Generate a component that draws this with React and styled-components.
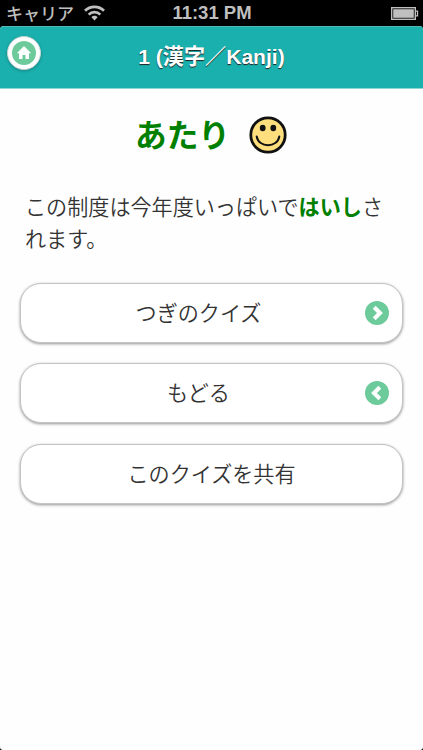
import React from "react";
import styled, { createGlobalStyle } from "styled-components";

const GlobalStyle = createGlobalStyle`
  * { box-sizing: border-box; }
  body {
    margin: 0;
    background: #000;
    font-family: "Liberation Sans", "Noto Sans CJK JP", sans-serif;
  }
`;

const Screen = styled.div`
  width: 423px;
  height: 750px;
  overflow: hidden;
  display: flex;
  flex-direction: column;
  background: #000;
`;

const StatusBar = styled.div`
  flex: none;
  height: 26px;
  display: grid;
  grid-template-columns: 1fr auto 1fr;
  align-items: center;
  padding: 0 4px 0 5px;
  color: #bfbfbf;
`;

const Carrier = styled.div`
  display: flex;
  align-items: center;
  gap: 10px;
  padding-left: 1px;
  font: 500 17px/26px "Noto Sans CJK JP", sans-serif;
`;

const Clock = styled.div`
  font-size: 18.5px;
  font-weight: 700;
  line-height: 26px;
`;

const Battery = styled.svg`
  justify-self: end;
  display: block;
`;

const AppWindow = styled.div`
  flex: 1;
  display: flex;
  flex-direction: column;
  background: #fefefe;
  border-radius: 4px 4px 3px 3px;
  overflow: hidden;
`;

const Header = styled.header`
  flex: none;
  height: 63px;
  display: grid;
  grid-template-columns: 47px 1fr 47px;
  background: #1ab0ae;
  border-top: 1px solid #57b9b7;
  border-bottom: 1px solid #8fd5d3;
`;

const HomeButton = styled.button`
  width: 34px;
  height: 34px;
  margin: 9px 0 0 7px;
  padding: 0;
  border: 1px solid #c5d5d3;
  border-radius: 50%;
  background: #fff;
  display: flex;
  align-items: center;
  justify-content: center;
  box-shadow: 0 1px 3px rgba(0, 0, 0, 0.25);
`;

const Title = styled.h1`
  margin: 0;
  text-align: center;
  color: #fff;
  font-size: 21.1px;
  font-weight: 700;
  line-height: 60px;
  white-space: nowrap;
  text-shadow: 0 1px 1px #222;
`;

const Content = styled.main`
  padding: 22px 20px 0;
`;

const Result = styled.div`
  display: flex;
  align-items: center;
  justify-content: center;
  gap: 18px;
  height: 48px;
`;

const ResultText = styled.h2`
  margin: 0 0 5px;
  color: #008000;
  font: 700 31.7px/48px "Noto Sans CJK JP", sans-serif;
`;

const Sentence = styled.p`
  margin: 31px 0 29px;
  padding: 0 0 0 5px;
  color: #333;
  font: 350 21.1px/32px "Noto Sans CJK JP", sans-serif;
`;

const Answer = styled.b`
  color: #008000;
  font-weight: 700;
`;

const Actions = styled.div`
  display: flex;
  flex-direction: column;
  gap: 20.4px;
`;

const ActionButton = styled.button`
  width: 383px;
  height: 60px;
  padding: 0 ${(p) => (p.$icon ? "13px" : "0")} 0 0;
  display: grid;
  grid-template-columns: ${(p) => (p.$icon ? "13px 1fr 24px" : "1fr")};
  align-items: center;
  border: 1px solid #c4c4c4;
  border-radius: 21px;
  background: #fff;
  box-shadow: 0 1px 3px rgba(0, 0, 0, 0.42);
  color: #333;
  font: 350 21.1px/32px "Noto Sans CJK JP", sans-serif;
`;

const Label = styled.span`
  text-align: center;
  padding: 0 ${(p) => p.$inset || 0}px 2px 0;
`;

function WifiIcon() {
  return (
    <svg width="21" height="16" viewBox="0 0 21 16" fill="none" stroke="#bfbfbf" strokeWidth="2.7">
      <path d="M1 5.8C6.1.5 14.9.5 20 5.8" />
      <path d="M4.7 9.6c3.1-3.3 8.5-3.3 11.6 0" />
      <path d="M7.4 12.2c1.7-1.8 4.5-1.8 6.2 0l-3.1 3.3z" fill="#bfbfbf" stroke="none" />
    </svg>
  );
}

function BatteryIcon() {
  return (
    <Battery width="29" height="15" viewBox="0 0 29 15">
      <rect x="1.7" y="1.7" width="23.6" height="11.6" fill="none" stroke="#bfbfbf" strokeWidth="1.4" />
      <rect x="3.2" y="3.2" width="20.6" height="8.6" fill="#bfbfbf" />
      <path d="M25.5 5.2h2v4.6h-2" fill="none" stroke="#bfbfbf" strokeWidth="1.3" />
    </Battery>
  );
}

function HomeIcon() {
  return (
    <svg width="24" height="24" viewBox="0 0 24 24">
      <circle cx="12" cy="12" r="12" fill="#6dcb9b" />
      <path d="M12 5.1 19.2 12.3H17V18h-3.5v-4h-3v4H7v-5.7H4.8z" fill="#fff" />
    </svg>
  );
}

function ChevronIcon({ left }) {
  return (
    <svg width="24" height="24" viewBox="0 0 24 24">
      <circle cx="12" cy="12" r="12" fill="#6dcb9b" />
      <path
        d={left ? "M14.8 6.2 9 12l5.8 5.8" : "M9.2 6.2 15 12l-5.8 5.8"}
        fill="none"
        stroke="#fff"
        strokeWidth="4.1"
      />
    </svg>
  );
}

function SmileIcon() {
  return (
    <svg width="40" height="40" viewBox="0 0 40 40">
      <circle cx="20" cy="20" r="17.2" fill="#ffdf7d" stroke="#111" strokeWidth="2.8" />
      <ellipse cx="14.7" cy="13" rx="2.9" ry="3.2" fill="#111" />
      <ellipse cx="25.3" cy="13" rx="2.9" ry="3.2" fill="#111" />
      <path d="M8.7 21.5C10.5 33 29.5 33 31.3 21.5" fill="none" stroke="#111" strokeWidth="2" strokeLinecap="round" />
    </svg>
  );
}

export default function App() {
  return (
    <>
      <GlobalStyle />
      <Screen>
        <StatusBar>
          <Carrier>
            キャリア
            <WifiIcon />
          </Carrier>
          <Clock>11:31 PM</Clock>
          <BatteryIcon />
        </StatusBar>
        <AppWindow>
          <Header>
            <HomeButton aria-label="Home">
              <HomeIcon />
            </HomeButton>
            <Title>1 (漢字／Kanji)</Title>
          </Header>
          <Content>
            <Result>
              <ResultText>あたり</ResultText>
              <SmileIcon />
            </Result>
            <Sentence lang="ja">
              この制度は今年度いっぱいで<Answer>はいし</Answer>されます。
            </Sentence>
            <Actions>
              <ActionButton $icon>
                <span />
                <Label $inset={2}>つぎのクイズ</Label>
                <ChevronIcon />
              </ActionButton>
              <ActionButton $icon>
                <span />
                <Label $inset={2}>もどる</Label>
                <ChevronIcon left />
              </ActionButton>
              <ActionButton>
                <Label>このクイズを共有</Label>
              </ActionButton>
            </Actions>
          </Content>
        </AppWindow>
      </Screen>
    </>
  );
}
